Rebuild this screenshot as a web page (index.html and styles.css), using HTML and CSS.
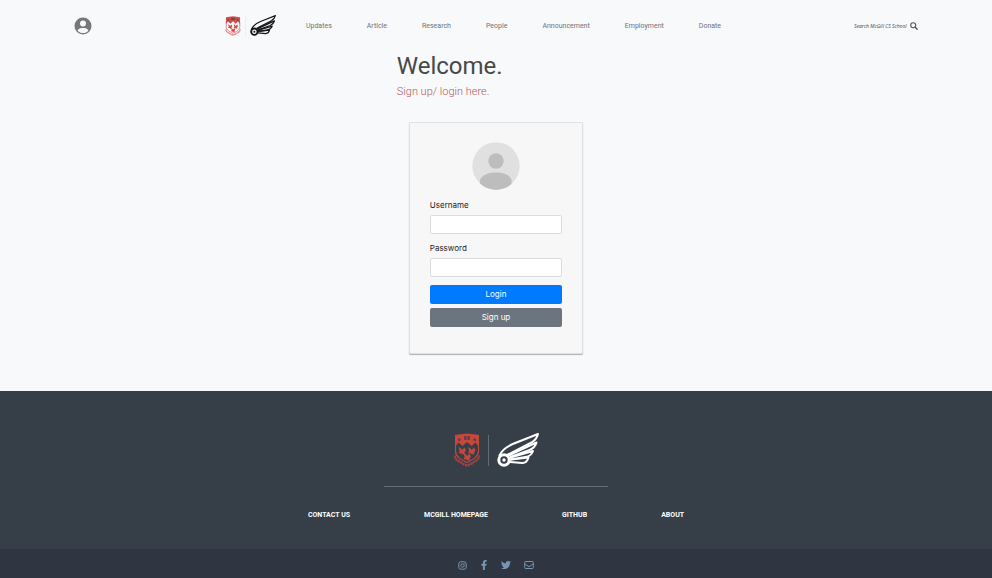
FILE: index.html
```html
<!DOCTYPE html>
<html lang="en">
<head>
<meta charset="utf-8">
<meta name="viewport" content="width=device-width, initial-scale=1">
<title>McGill CS School - Login</title>
<link rel="stylesheet" href="styles.css">
</head>
<body>
<svg class="sprite" aria-hidden="true">
  <symbol id="crest" viewBox="0 0 26 34">
    <path fill="currentColor" d="M1 2 4 1.500 13 .5 22 1.500 25 2V14L21.500 9.500 17.500 13 13 9 8.500 13 4.500 9.500 1 14Z"/>
    <path fill="none" stroke="currentColor" stroke-width="1.100" d="M1.500 11V18C1.500 24 7 26.500 13 29.500 19 26.500 24.500 24 24.500 18V11"/>
    <path fill="none" stroke="currentColor" stroke-width="2.200" stroke-dasharray="2.400 .5" opacity=".75" d="M1 22.500C1 28 6 28 8 30.500L13 32.500 18 30.500C20 28 25 28 25 22.500"/>
    <path id="bird" fill="currentColor" d="M4.500 14 7 15.500 8 17 10.500 14.500 12 17.500 10.300 19.800 11.300 21 8.500 21.500 7 20.300 4.500 20 5.700 18Z"/>
    <use href="#bird" x="9.500"/>
    <use href="#bird" x="5" y="6"/>
    <path class="crest-detail" d="M10 3H12.600V7H10ZM13.400 3H16V7H13.400ZM3.500 6.500 5.200 5 7 6.500 6.200 8H4.300ZM19 6.500 20.800 5 22.500 6.500 21.700 8H19.800Z"/>
  </symbol>
  <symbol id="wing" viewBox="0 0 42 34">
    <g fill="none" stroke="currentColor" stroke-linejoin="round" stroke-linecap="round">
      <path stroke-width="2" d="M2.500 22.500C5 17 10 13.500 17 10.500L41 1C40 5 38 7.500 34.500 9.500L11 21.500"/>
      <path stroke-width="2" d="M12.500 22 39.500 9.500C38.500 13.500 36 15.500 32.500 17L13.500 24"/>
      <path stroke-width="2" d="M13.500 24.500 36 18C34.500 22 32 23.500 28.500 24L14 26.500"/>
      <path stroke-width="2" d="M14 26.500 31.500 24.500C30.500 28 28.500 30 25.500 30L13 29"/>
      <circle cx="7" cy="27" r="5.200" stroke-width="3"/>
    </g>
    <circle cx="7" cy="27" r="1.700" fill="currentColor"/>
  </symbol>
</svg>

<header class="topbar">
  <a class="account" href="#" aria-label="Account">
    <svg viewBox="0 0 18 18"><circle cx="9" cy="9" r="8.500" fill="currentColor"/><circle class="cutout" cx="9" cy="6.600" r="3"/><path class="cutout" d="M3.600 13.400C4.600 11.300 6.400 11 9 11S13.400 11.300 14.400 13.400C13 15.200 11 16 9 16S5 15.200 3.600 13.400Z"/></svg>
  </a>
  <nav class="nav" aria-label="Main">
    <a class="brand" href="#" aria-label="McGill CS School">
      <svg class="crest"><use href="#crest"/></svg>
      <span class="divider"></span>
      <svg class="wing"><use href="#wing"/></svg>
    </a>
    <a href="#">Updates</a>
    <a href="#">Article</a>
    <a href="#">Research</a>
    <a href="#">People</a>
    <a href="#">Announcement</a>
    <a href="#">Employment</a>
    <a href="#">Donate</a>
  </nav>
  <form class="search" role="search">
    <input type="text" placeholder="Search McGill CS School" aria-label="Search McGill CS School">
    <button type="button" aria-label="Search">
      <svg viewBox="0 0 8 8" fill="none" stroke="currentColor" stroke-linecap="round"><circle cx="3.200" cy="3.200" r="2.500" stroke-width="1.100"/><path d="M5.200 5.200 7.200 7.200" stroke-width="1.400"/></svg>
    </button>
  </form>
</header>

<main class="content">
  <h1>Welcome.</h1>
  <p class="lead">Sign up/ login here.</p>
  <form class="card">
    <svg class="avatar" viewBox="0 0 48 48" aria-hidden="true">
      <defs><clipPath id="disc"><circle cx="24" cy="24" r="23.700"/></clipPath></defs>
      <g clip-path="url(#disc)"><rect width="48" height="48" fill="#e0e0e0"/><circle cx="24" cy="19" r="7.700" fill="#bdbdbd"/><path fill="#bdbdbd" d="M8 48V38C10 33 16 30.500 24 30.500S38 33 39.500 38V48Z"/></g>
    </svg>
    <label for="username">Username</label>
    <input id="username" type="text">
    <label for="password">Password</label>
    <input id="password" type="password">
    <button class="primary" type="button">Login</button>
    <button class="secondary" type="button">Sign up</button>
  </form>
</main>

<footer class="footer">
  <div class="footer-main">
    <div class="footer-brand">
      <svg class="crest"><use href="#crest"/></svg>
      <span class="divider"></span>
      <svg class="wing"><use href="#wing"/></svg>
    </div>
    <hr>
    <nav class="footer-links" aria-label="Footer">
      <a href="#">CONTACT US</a>
      <a href="#">MCGILL HOMEPAGE</a>
      <a href="#">GITHUB</a>
      <a href="#">ABOUT</a>
    </nav>
  </div>
  <div class="social">
    <a href="#" aria-label="Instagram"><svg class="small" viewBox="0 0 9 9" fill="none" stroke="currentColor"><rect x=".8" y=".8" width="7.400" height="7.400" rx="2"/><circle cx="4.500" cy="4.500" r="1.700"/><circle cx="6.700" cy="2.400" r=".3" stroke-width=".5"/></svg></a>
    <a href="#" aria-label="Facebook"><svg class="narrow" viewBox="0 0 320 512" fill="currentColor"><path d="M279 288 293 195H204V135C204 110 216 85 256 85H297V6S260 0 225 0C152 0 104 44 104 125V195H23V288H104V512H204V288Z"/></svg></a>
    <a href="#" aria-label="Twitter"><svg viewBox="0 0 512 512" fill="currentColor"><path d="M459 152C460 156 460 161 460 165 460 304 354 464 161 464 102 464 46 447 0 417 8 418 16 418 25 418 74 418 119 401 155 373 109 372 70 342 57 300 64 301 70 302 77 302 87 302 96 300 105 298 57 288 21 246 21 195V193C35 201 51 206 68 207 40 188 21 156 21 119 21 100 26 82 35 67 87 130 165 172 252 176 250 169 249 161 249 153 249 95 296 48 354 48 384 48 411 61 431 81 454 76 477 68 497 56 489 81 473 101 451 114 472 112 493 106 512 98 498 119 480 137 459 152Z"/></svg></a>
    <a href="#" aria-label="Email"><svg viewBox="0 0 10 9" fill="none" stroke="currentColor" stroke-width="1"><rect x=".7" y="1" width="8.600" height="7" rx=".8"/><path d="M.8 3.200 4 5.700Q5 6.300 6 5.700L9.200 3.200"/></svg></a>
  </div>
</footer>
</body>
</html>
```
FILE: styles.css
```css
* { box-sizing: border-box; }

body {
  margin: 0;
  min-height: 100vh;
  display: flex;
  flex-direction: column;
  background: #f8f9fb;
  color: #212529;
  font-family: Inter, "Liberation Sans", sans-serif;
}

a { color: inherit; text-decoration: none; }
svg { display: block; }
button, input { font: inherit; }
.sprite { position: absolute; width: 0; height: 0; }
.crest-detail { fill: #363f48; opacity: .7; }

.topbar {
  display: flex;
  align-items: center;
  justify-content: space-between;
  height: 51px;
  padding: 0 74px;
}

.account { color: #777; }
.account svg { width: 18px; height: 18px; }
.cutout { fill: #f8f9fb; }

.nav {
  display: flex;
  align-items: center;
  gap: 35px;
  color: #707276;
  font-family: Roboto, "Liberation Sans", sans-serif;
  font-size: 7px;
  line-height: 10px;
}

.brand {
  display: flex;
  align-items: center;
  gap: 4px;
  margin-right: -5px;
  color: #151515;
}
.brand .crest { width: 16px; height: 20px; color: #cf4f4a; }
.brand .divider { width: 1px; height: 20px; background: #eceef1; }
.brand .wing { width: 26px; height: 21px; }

.search { display: flex; align-items: center; color: #444; }
.search input {
  width: 56px;
  padding: 0;
  border: 0;
  background: none;
  font-family: "Open Sans", "Liberation Sans", sans-serif;
  font-size: 5px;
  font-style: italic;
  line-height: 10px;
}
.search input::placeholder { color: #444; opacity: 1; }
.search button { padding: 0; border: 0; background: none; color: #555; }
.search svg { width: 8px; height: 8px; }

.content { width: 20%; margin: 0 auto; padding-bottom: 37px; }

h1 {
  margin: 0;
  color: #484848;
  font-family: Roboto, "Liberation Sans", sans-serif;
  font-size: 24px;
  font-weight: 400;
  line-height: 30px;
}

.lead {
  margin: 4px 0 24px;
  color: #b05a5a;
  font-family: Roboto, "Liberation Sans", sans-serif;
  font-size: 11px;
  font-weight: 300;
  line-height: 13px;
}

.card {
  display: flex;
  flex-direction: column;
  margin: 0 12px;
  padding: 19px 20px 22px;
  border: 1px solid #dfe1e3;
  border-radius: 2px;
  background: #f7f7f7;
  box-shadow: 0 1px 1px rgba(0, 0, 0, .3);
}

.avatar { width: 48px; height: 48px; margin: 0 auto 9px; }

.card label { margin-bottom: 4px; font-size: 8px; line-height: 12px; }

.card input {
  width: 100%;
  height: 19px;
  margin-bottom: 8px;
  padding: 0 6px;
  border: 1px solid #d8dce0;
  border-radius: 2px;
  background: #fff;
  font-size: 8px;
}

.card button {
  height: 19px;
  margin-bottom: 4px;
  padding: 0;
  border: 0;
  border-radius: 2px;
  color: #fff;
  font-size: 8px;
  line-height: 19px;
}
.card .primary { background: #007bff; }
.card .secondary { background: #6c757d; }

.footer { flex: 1; display: flex; flex-direction: column; background: #363f48; color: #fff; }

.footer-main {
  flex: 1;
  display: flex;
  flex-direction: column;
  align-items: center;
  padding-top: 42px;
}

.footer-brand { display: flex; align-items: center; gap: 8px; }
.footer-brand .crest { width: 26px; height: 34px; color: #c9463d; }
.footer-brand .divider { width: 1px; height: 31px; background: #626a72; }
.footer-brand .wing { width: 42px; height: 34px; }

hr { width: 224px; margin: 19px 0 22px; border: 0; border-top: 1px solid #5f6d75; }

.footer-links {
  display: flex;
  gap: 74px;
  font-family: Roboto, "Liberation Sans", sans-serif;
  font-size: 7px;
  font-weight: 700;
  line-height: 12px;
}

.social {
  display: flex;
  align-items: center;
  justify-content: center;
  gap: 13px;
  height: 29px;
  padding-top: 3px;
  background: #2f3642;
  color: #7796b3;
}
.social svg { width: 10px; height: 10px; }
.social .small { width: 9px; height: 9px; }
.social .narrow { width: 8px; }
```
